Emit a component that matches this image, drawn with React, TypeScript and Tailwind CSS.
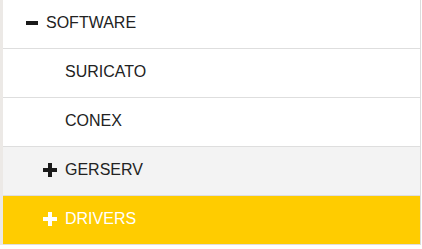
const font = { fontFamily: '"Liberation Sans", Arial, sans-serif' };

function Minus() {
  return (
    <svg width="12" height="12" viewBox="0 0 12 12" className="shrink-0">
      <rect x="0" y="4" width="12" height="4" fill="#1a1a1a" />
    </svg>
  );
}

function Plus({ color }: { color: string }) {
  return (
    <svg width="14" height="14" viewBox="0 0 14 14" className="shrink-0">
      <rect x="0" y="5" width="14" height="4" fill={color} />
      <rect x="5" y="0" width="4" height="14" fill={color} />
    </svg>
  );
}

export default function App() {
  return (
    <div className="w-[422px] h-[249px] bg-white text-[16px]" style={font}>
      <div className="flex h-[245px]">
        <div className="w-[3px] bg-[#ece9e6]" />
        <div className="flex-1 border-r border-[#dcdcdc] flex flex-col">
          <div className="h-[49px] flex items-center border-b border-[#dedede] pl-[23px] pb-[3px] gap-[8px] text-[#222]">
            <Minus />
            <span>SOFTWARE</span>
          </div>
          <div className="h-[49px] flex items-center border-b border-[#dedede] pl-[62px] pb-[2px] text-[#222]">
            SURICATO
          </div>
          <div className="h-[49px] flex items-center border-b border-[#dedede] pl-[62px] pb-[2px] text-[#222]">
            CONEX
          </div>
          <div className="h-[49px] flex items-center border-b border-[#dedede] bg-[#f3f3f3] pl-[40px] pb-[2px] gap-[8px] text-[#222]">
            <Plus color="#1a1a1a" />
            <span>GERSERV</span>
          </div>
          <div className="h-[49px] flex items-center border-b border-[#dedede] bg-[#ffcc00] pl-[40px] pb-[2px] gap-[8px] text-white">
            <Plus color="#ffffff" />
            <span>DRIVERS</span>
          </div>
        </div>
        <div className="w-[1px]" />
      </div>
    </div>
  );
}
